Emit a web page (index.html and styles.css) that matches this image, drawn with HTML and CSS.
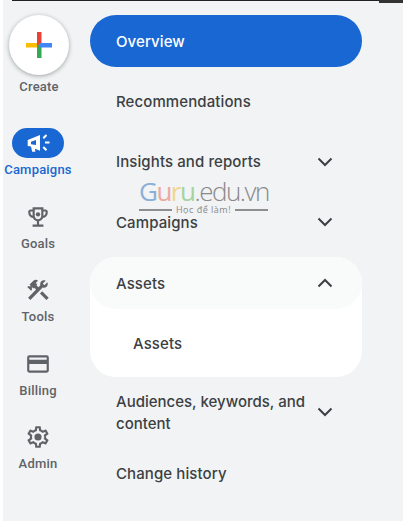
FILE: index.html
```html
<!DOCTYPE html>
<html lang="en">
<head>
<meta charset="utf-8">
<title>Campaign navigation</title>
<link rel="stylesheet" href="styles.css">
</head>
<body>
<div class="topline"></div>
<div class="topblock"></div>
<div class="app">
  <nav class="rail">
    <div class="rail-create">
      <button class="fab" aria-label="Create">
        <svg viewBox="0 0 26 26" width="26" height="26">
          <rect x="0" y="11" width="13" height="4.5" fill="#fbbc04"/>
          <rect x="11" y="0" width="4.5" height="13" fill="#ea4335"/>
          <rect x="11" y="13" width="4.5" height="13" fill="#34a853"/>
          <rect x="13" y="11" width="13" height="4.5" fill="#4285f4"/>
        </svg>
      </button>
      <span class="rail-label">Create</span>
    </div>
    <div class="rail-item active">
      <span class="pill">
        <svg viewBox="0 0 24 24" width="24" height="24" fill="#fff">
          <path d="M1.700 9 14 4v15.700L9 17.800 9.300 20.700H6.200L5 15.500 1.700 15zM5 10.700v2.500l5 .9V9z" fill-rule="evenodd"/>
          <path d="M17.300 7.300 20.500 4M19 11.500h4.500M17.300 16 20.500 19.300" stroke="#fff" stroke-width="2" fill="none"/>
        </svg>
      </span>
      <span class="rail-label">Campaigns</span>
    </div>
    <div class="rail-item">
      <span class="icon">
        <svg viewBox="0 0 24 24" width="26" height="26" fill="#5f6368">
          <path d="M19 5h-2V3H7v2H5c-1.100 0-2 .9-2 2v1c0 2.550 1.920 4.630 4.390 4.940.63 1.500 1.980 2.630 3.610 2.960V19H7v2h10v-2h-4v-3.100c1.630-.33 2.980-1.460 3.610-2.960C19.080 12.630 21 10.550 21 8V7c0-1.100-.9-2-2-2zM5 8V7h2v3.820C5.840 10.400 5 9.300 5 8zm14 0c0 1.300-.84 2.400-2 2.820V7h2v1zm-7 6c-1.650 0-3-1.350-3-3V5h6v6c0 1.650-1.350 3-3 3z"/>
          <circle cx="12" cy="9.500" r="2"/>
        </svg>
      </span>
      <span class="rail-label">Goals</span>
    </div>
    <div class="rail-item">
      <span class="icon">
        <svg viewBox="0 0 24 24" width="26" height="26" fill="#5f6368">
          <path d="M13.783 15.172l2.121-2.121 5.996 5.996-2.121 2.121zM17.500 10c1.930 0 3.500-1.570 3.500-3.500 0-.58-.16-1.120-.41-1.600l-2.700 2.700-1.490-1.490 2.700-2.700c-.48-.25-1.020-.41-1.600-.41C15.570 3 14 4.570 14 6.500c0 .41.08.8.21 1.160l-1.850 1.850-1.780-1.780.71-.71-1.410-1.410L12 3.490c-1.170-1.170-3.070-1.170-4.240 0L4.220 7.030l1.410 1.410H2.810l-.71.71 3.540 3.540.71-.71V9.150l1.410 1.410.71-.71 1.780 1.780-7.410 7.410 2.120 2.120L16.340 9.790c.36.13.75.21 1.160.21z"/>
        </svg>
      </span>
      <span class="rail-label">Tools</span>
    </div>
    <div class="rail-item">
      <span class="icon">
        <svg viewBox="0 0 24 24" width="26" height="26" fill="#5f6368">
          <path d="M20 4H4a2 2 0 0 0-2 2v12a2 2 0 0 0 2 2h16a2 2 0 0 0 2-2V6a2 2 0 0 0-2-2zm0 14H4v-6h16zm0-10H4V6h16z"/>
        </svg>
      </span>
      <span class="rail-label">Billing</span>
    </div>
    <div class="rail-item">
      <span class="icon">
        <svg viewBox="0 0 24 24" width="26" height="26" fill="#5f6368">
          <path d="M19.430 12.980c.04-.32.070-.64.070-.98s-.03-.66-.07-.98l2.110-1.650c.19-.15.240-.42.120-.64l-2-3.460a.5.5 0 0 0-.61-.22l-2.490 1c-.52-.4-1.080-.73-1.690-.98l-.38-2.650A.49.49 0 0 0 14 2h-4a.49.49 0 0 0-.49.420l-.38 2.650c-.61.25-1.170.59-1.690.98l-2.490-1a.5.5 0 0 0-.61.220l-2 3.460a.49.49 0 0 0 .12.640l2.110 1.650c-.04.320-.07.650-.07.980s.03.660.07.980l-2.110 1.650a.5.500 0 0 0-.12.640l2 3.460c.12.220.39.300.61.220l2.490-1c.52.400 1.080.730 1.690.980l.38 2.650c.03.240.24.420.49.420h4c.25 0 .46-.18.49-.42l.38-2.650c.61-.25 1.170-.59 1.690-.98l2.490 1c.23.090.49 0 .61-.22l2-3.460a.5.5 0 0 0-.12-.64zM17.450 11.270c.4.310.5.520.5.730s-.2.430-.5.730l-.14 1.130.89.700 1.080.84-.7 1.210-1.270-.51-1.040-.42-.9.680c-.43.320-.84.560-1.250.73l-1.060.43-.16 1.130-.2 1.350h-1.400l-.19-1.350-.16-1.130-1.060-.43a5.600 5.600 0 0 1-1.230-.71l-.91-.7-1.060.43-1.270.51-.7-1.210 1.080-.84.890-.7-.14-1.130c-.03-.31-.05-.54-.05-.74s.02-.43.05-.73l.14-1.130-.89-.7-1.080-.84.7-1.210 1.270.51 1.040.42.900-.68c.43-.32.840-.56 1.250-.73l1.060-.43.160-1.130.2-1.350h1.390l.19 1.350.16 1.130 1.060.43c.43.180.83.410 1.230.71l.91.700 1.060-.43 1.270-.51.7 1.210-1.070.85-.89.700z"/>
          <circle cx="12" cy="12" r="3.300"/>
        </svg>
      </span>
      <span class="rail-label">Admin</span>
    </div>
  </nav>
  <ul class="menu">
    <li class="row selected">Overview</li>
    <li class="row">Recommendations</li>
    <li class="row"><span>Insights and reports</span><svg class="chev" viewBox="0 0 16 10" width="16" height="10"><path d="M1.500 1.500 8 8l6.500-6.500" /></svg></li>
    <li class="row"><span>Campaigns</span><svg class="chev" viewBox="0 0 16 10" width="16" height="10"><path d="M1.500 1.500 8 8l6.500-6.500" /></svg></li>
    <li class="group">
      <div class="row open"><span>Assets</span><svg class="chev" viewBox="0 0 16 10" width="16" height="10"><path d="M1.500 8.500 8 2l6.500 6.500" /></svg></div>
      <div class="row sub">Assets</div>
    </li>
    <li class="row tall"><span>Audiences, keywords, and content</span><svg class="chev" viewBox="0 0 16 10" width="16" height="10"><path d="M1.500 1.500 8 8l6.500-6.500" /></svg></li>
    <li class="row last">Change history</li>
  </ul>
</div>
<div class="watermark">
  <div class="wm-logo"><span class="g1">G</span><span class="g2">u</span><span class="g3">r</span><span class="g4">u</span><span class="g5">.edu.vn</span></div>
  <div class="wm-tag"><i></i><span>Học để làm!</span><i></i></div>
</div>
</body>
</html>
```
FILE: styles.css
```css
* { box-sizing: border-box; }
html, body { margin: 0; height: 100%; }
body {
  width: 403px;
  height: 521px;
  overflow: hidden;
  background: #fff;
  position: relative;
  font-family: Roboto, "Noto Sans", sans-serif;
}
.topline {
  position: absolute;
  left: 12px; top: 0;
  width: 367px; height: 1px;
  background: #222;
  z-index: 2;
}
.topblock {
  position: absolute;
  left: 379px; top: 0;
  width: 24px; height: 3px;
  background: #333;
  z-index: 2;
}
.app {
  margin-left: 3px;
  height: 521px;
  background: #f1f3f4;
  display: flex;
}
.rail {
  width: 72px;
  flex: none;
  display: flex;
  flex-direction: column;
  align-items: center;
  padding-top: 15px;
}
.rail-create {
  display: flex;
  flex-direction: column;
  align-items: center;
  margin-bottom: 33px;
}
.fab {
  width: 60px;
  height: 60px;
  border: 0;
  border-radius: 50%;
  background: #fff;
  box-shadow: 0 1px 4px rgba(60,64,67,.45);
  display: flex;
  align-items: center;
  justify-content: center;
  padding: 0;
}
.rail-label {
  font-size: 13px;
  line-height: 16px;
  font-weight: 500;
  color: #5f6368;
  letter-spacing: .2px;
  white-space: nowrap;
}
.rail-create .rail-label { margin-top: 4px; }
.rail-item {
  display: flex;
  flex-direction: column;
  align-items: center;
  height: 73.500px;
  margin-right: 2px;
}
.pill {
  width: 52px;
  height: 30px;
  border-radius: 15px;
  background: #1967d2;
  display: flex;
  align-items: center;
  justify-content: center;
  margin-bottom: 4px;
}
.icon {
  height: 30px;
  display: flex;
  align-items: center;
  justify-content: center;
  margin-bottom: 4px;
}
.active .rail-label { color: #1967d2; }
.menu {
  list-style: none;
  margin: 15px 0 0 15px;
  padding: 0;
  width: 272px;
  font-size: 15px;
  font-weight: 500;
  color: #3c4043;
  font-family: Inter, Roboto, sans-serif;
}
.row {
  height: 60.500px;
  display: flex;
  align-items: center;
  justify-content: space-between;
  padding: 0 29px 0 26px;
  letter-spacing: .1px;
}
.selected {
  height: 52px;
  border-radius: 26px;
  background: #1967d2;
  color: #fff;
  margin-bottom: 4px;
}
.selected + .row { height: 60px; }
.selected + .row + .row { height: 61px; }
.group {
  background: #fff;
  border-radius: 26px;
  margin-top: 4.500px;
  height: 120px;
}
.open {
  height: 52px;
  border-radius: 26px;
  background: #f9fafa;
}
.sub {
  height: 68px;
  padding-left: 43px;
}
.tall {
  line-height: 22px;
  height: 70px;
}
.tall span {
  width: 200px;
  padding-top: 2px;
  letter-spacing: 0;
}
.last { height: 52px; }
.chev {
  fill: none;
  stroke: #3c4043;
  stroke-width: 2;
  flex: none;
}
.watermark {
  position: absolute;
  left: 139px;
  top: 177px;
  width: 129px;
  pointer-events: none;
}
.wm-logo {
  font-family: "Open Sans", sans-serif;
  font-size: 26px;
  line-height: 28px;
  letter-spacing: -1.500px;
  white-space: nowrap;
}
.g1 { color: #8ab0d8; }
.g2 { color: #eda8a0; }
.g3 { color: #f0d78c; }
.g4 { color: #a5d3a0; }
.g5 { color: #8a8a8a; font-weight: 300; }
.wm-tag {
  display: flex;
  align-items: center;
  gap: 4px;
  font-size: 9px;
  line-height: 10px;
  letter-spacing: .5px;
  color: #8a8a8a;
  font-family: "Open Sans", sans-serif;
  white-space: nowrap;
}
.wm-tag i {
  flex: 1;
  height: 2px;
  background: #8f8f8f;
}
```
